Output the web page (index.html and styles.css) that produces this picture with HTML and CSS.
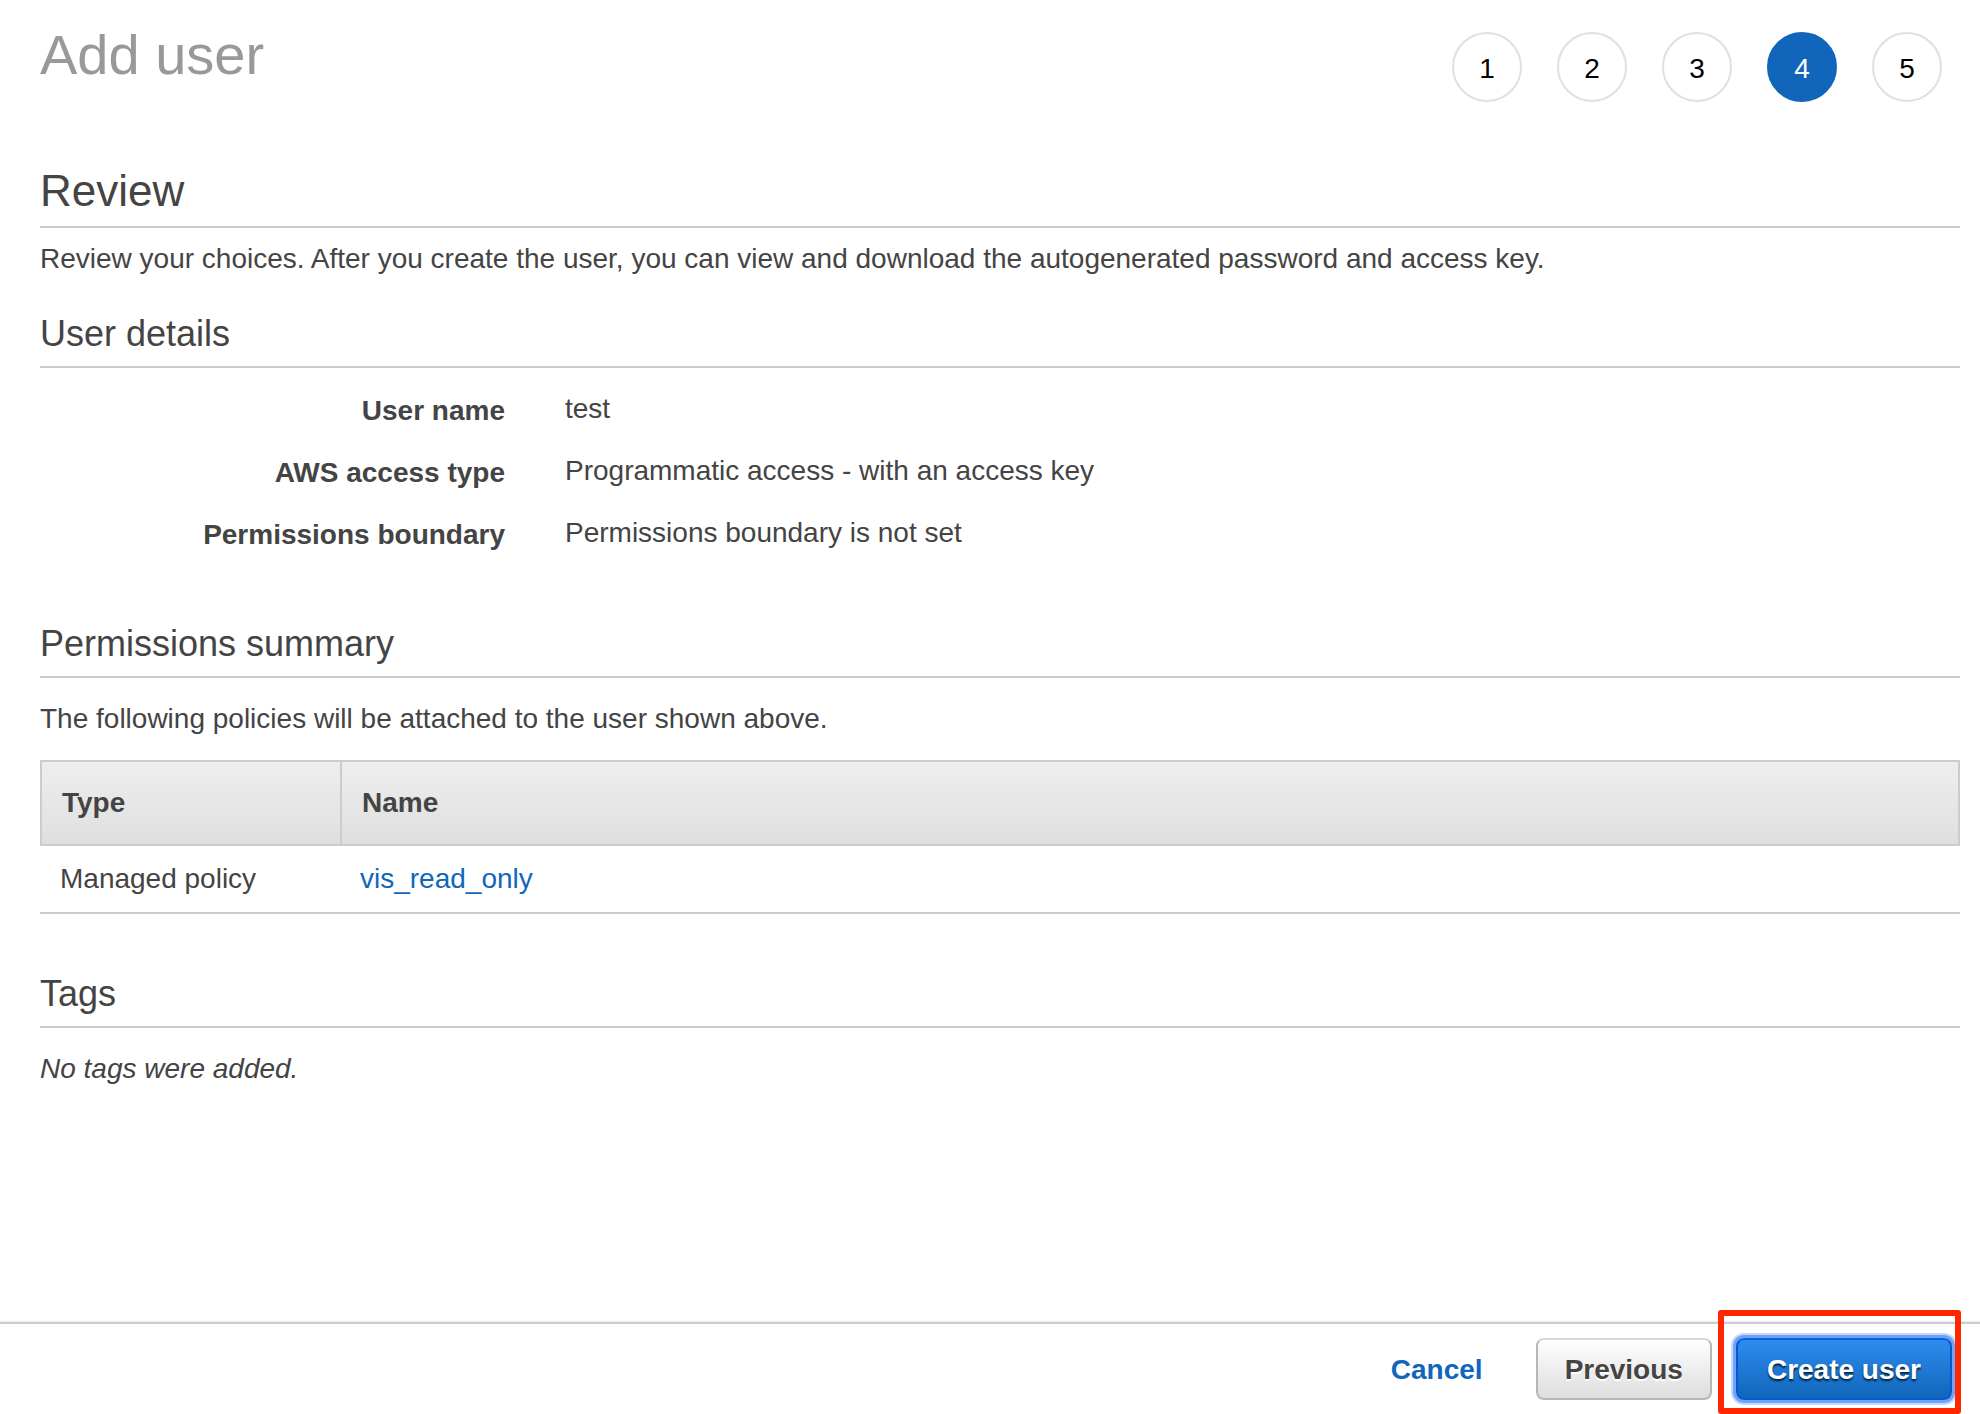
FILE: index.html
```html
<!DOCTYPE html>
<html lang="en">
<head>
    <meta charset="UTF-8">
    <meta name="viewport" content="width=device-width, initial-scale=1.0">
    <title>Add user</title>
    <link rel="stylesheet" href="styles.css">
</head>
<body>
    <header class="header">
        <h1>Add user</h1>
        <ol class="steps">
            <li class="step">1</li>
            <li class="step">2</li>
            <li class="step">3</li>
            <li class="step active" aria-current="step">4</li>
            <li class="step">5</li>
        </ol>
    </header>
    <main class="content">
        <h2>Review</h2>
        <p class="intro">Review your choices. After you create the user, you can view and download the autogenerated password and access key.</p>

        <section class="details">
            <h3>User details</h3>
            <dl>
                <dt>User name</dt>
                <dd>test</dd>
                <dt>AWS access type</dt>
                <dd>Programmatic access - with an access key</dd>
                <dt>Permissions boundary</dt>
                <dd>Permissions boundary is not set</dd>
            </dl>
        </section>

        <section class="permissions">
            <h3>Permissions summary</h3>
            <p>The following policies will be attached to the user shown above.</p>
            <table>
                <thead>
                    <tr>
                        <th class="type" scope="col">Type</th>
                        <th scope="col">Name</th>
                    </tr>
                </thead>
                <tbody>
                    <tr>
                        <td>Managed policy</td>
                        <td><a href="#">vis_read_only</a></td>
                    </tr>
                </tbody>
            </table>
        </section>

        <section class="tags">
            <h3>Tags</h3>
            <p><em>No tags were added.</em></p>
        </section>
    </main>
    <footer class="footer">
        <a class="cancel" href="#">Cancel</a>
        <button class="btn" type="button">Previous</button>
        <div class="highlight">
            <button class="btn primary" type="button">Create user</button>
        </div>
    </footer>
</body>
</html>
```
FILE: styles.css
```css
* {
    box-sizing: border-box;
}
body {
    display: flex;
    flex-direction: column;
    min-height: 100vh;
    margin: 0;
    background: #fff;
    color: #444;
    font-family: "Helvetica Neue", "Liberation Sans", Arial, sans-serif;
    font-size: 28px;
    line-height: 42px;
}
h1, h2, h3, p, dl, dd, ol {
    margin: 0;
    padding: 0;
}
h1, h2, h3 {
    font-weight: normal;
}
h1 {
    color: #999;
    font-size: 56px;
    line-height: 62px;
}
h2 {
    padding-bottom: 10px;
    border-bottom: 2px solid #ccc;
    font-size: 44px;
    line-height: 50px;
}
h3 {
    padding-bottom: 10px;
    margin-bottom: 20px;
    border-bottom: 2px solid #ccc;
    font-size: 36px;
    line-height: 44px;
}
a {
    color: #1166bb;
    text-decoration: none;
}

/* Header and wizard steps */
.header {
    display: flex;
    justify-content: space-between;
    padding: 24px 38px 0 40px;
}
.steps {
    display: flex;
    gap: 35px;
    margin-top: 8px;
    list-style: none;
}
.step {
    width: 70px;
    height: 70px;
    border: 2px solid #e0e0e0;
    border-radius: 50%;
    color: #000;
    line-height: 70px;
    text-align: center;
}
.step.active {
    background: #1166bb;
    border-color: #1166bb;
    color: #fff;
}

/* Review */
.content {
    flex: 1;
    padding: 64px 20px 40px 40px;
}
.intro {
    margin-top: 10px;
}
.details {
    margin-top: 32px;
}
.details dl {
    display: grid;
    grid-template-columns: 465px 1fr;
    gap: 18px 60px;
}
.details dt {
    padding-top: 2px;
    font-weight: bold;
    text-align: right;
}
.permissions {
    margin-top: 66px;
}
.tags {
    margin-top: 58px;
}
table {
    width: 100%;
    margin-top: 20px;
    border-spacing: 0;
    text-align: left;
}
th {
    padding: 20px;
    border: 2px solid #ccc;
    border-left: 0;
    background: linear-gradient(#eee, #dfdfdf);
}
th:first-child {
    border-left: 2px solid #ccc;
}
.type {
    width: 302px;
}
td {
    padding: 12px 20px;
    border-bottom: 2px solid #ccc;
}
td + td {
    padding-left: 18px;
}

/* Footer buttons */
.footer {
    display: flex;
    justify-content: flex-end;
    align-items: center;
    padding: 14px 28px 14px 40px;
    border-top: 2px solid #ccc;
    box-shadow: 0 -1px 1px #eee;
}
.cancel {
    padding-top: 2px;
    margin-right: 53px;
    font-weight: bold;
}
.btn {
    height: 62px;
    padding: 2px 27px 0;
    border: 2px solid #b7b7b7;
    border-top-color: #d9d9d9;
    border-radius: 8px;
    background: linear-gradient(#fff, #ddd);
    color: #444;
    font: bold 28px "Helvetica Neue", "Liberation Sans", Arial, sans-serif;
    text-shadow: 0 2px 1px #fff;
    cursor: pointer;
}
.primary {
    padding: 2px 29px 0;
    border-color: #0559c9;
    border-top-color: #0a63dc;
    background: linear-gradient(#2e8cee, #1166bb);
    box-shadow: 0 0 0 3px #6fa2fb, 0 0 0 5px #c3d8fb;
    color: #fff;
    text-shadow: 0 2px 2px #023;
}
.highlight {
    position: relative;
    margin-left: 24px;
}
/* red frame over the button and the footer edge */
.highlight::after {
    content: "";
    position: absolute;
    top: -28px;
    right: -9px;
    bottom: -14px;
    left: -18px;
    border: 6px solid #ff2600;
    border-radius: 3px;
    pointer-events: none;
}
.highlight .btn {
    display: block;
}
```
